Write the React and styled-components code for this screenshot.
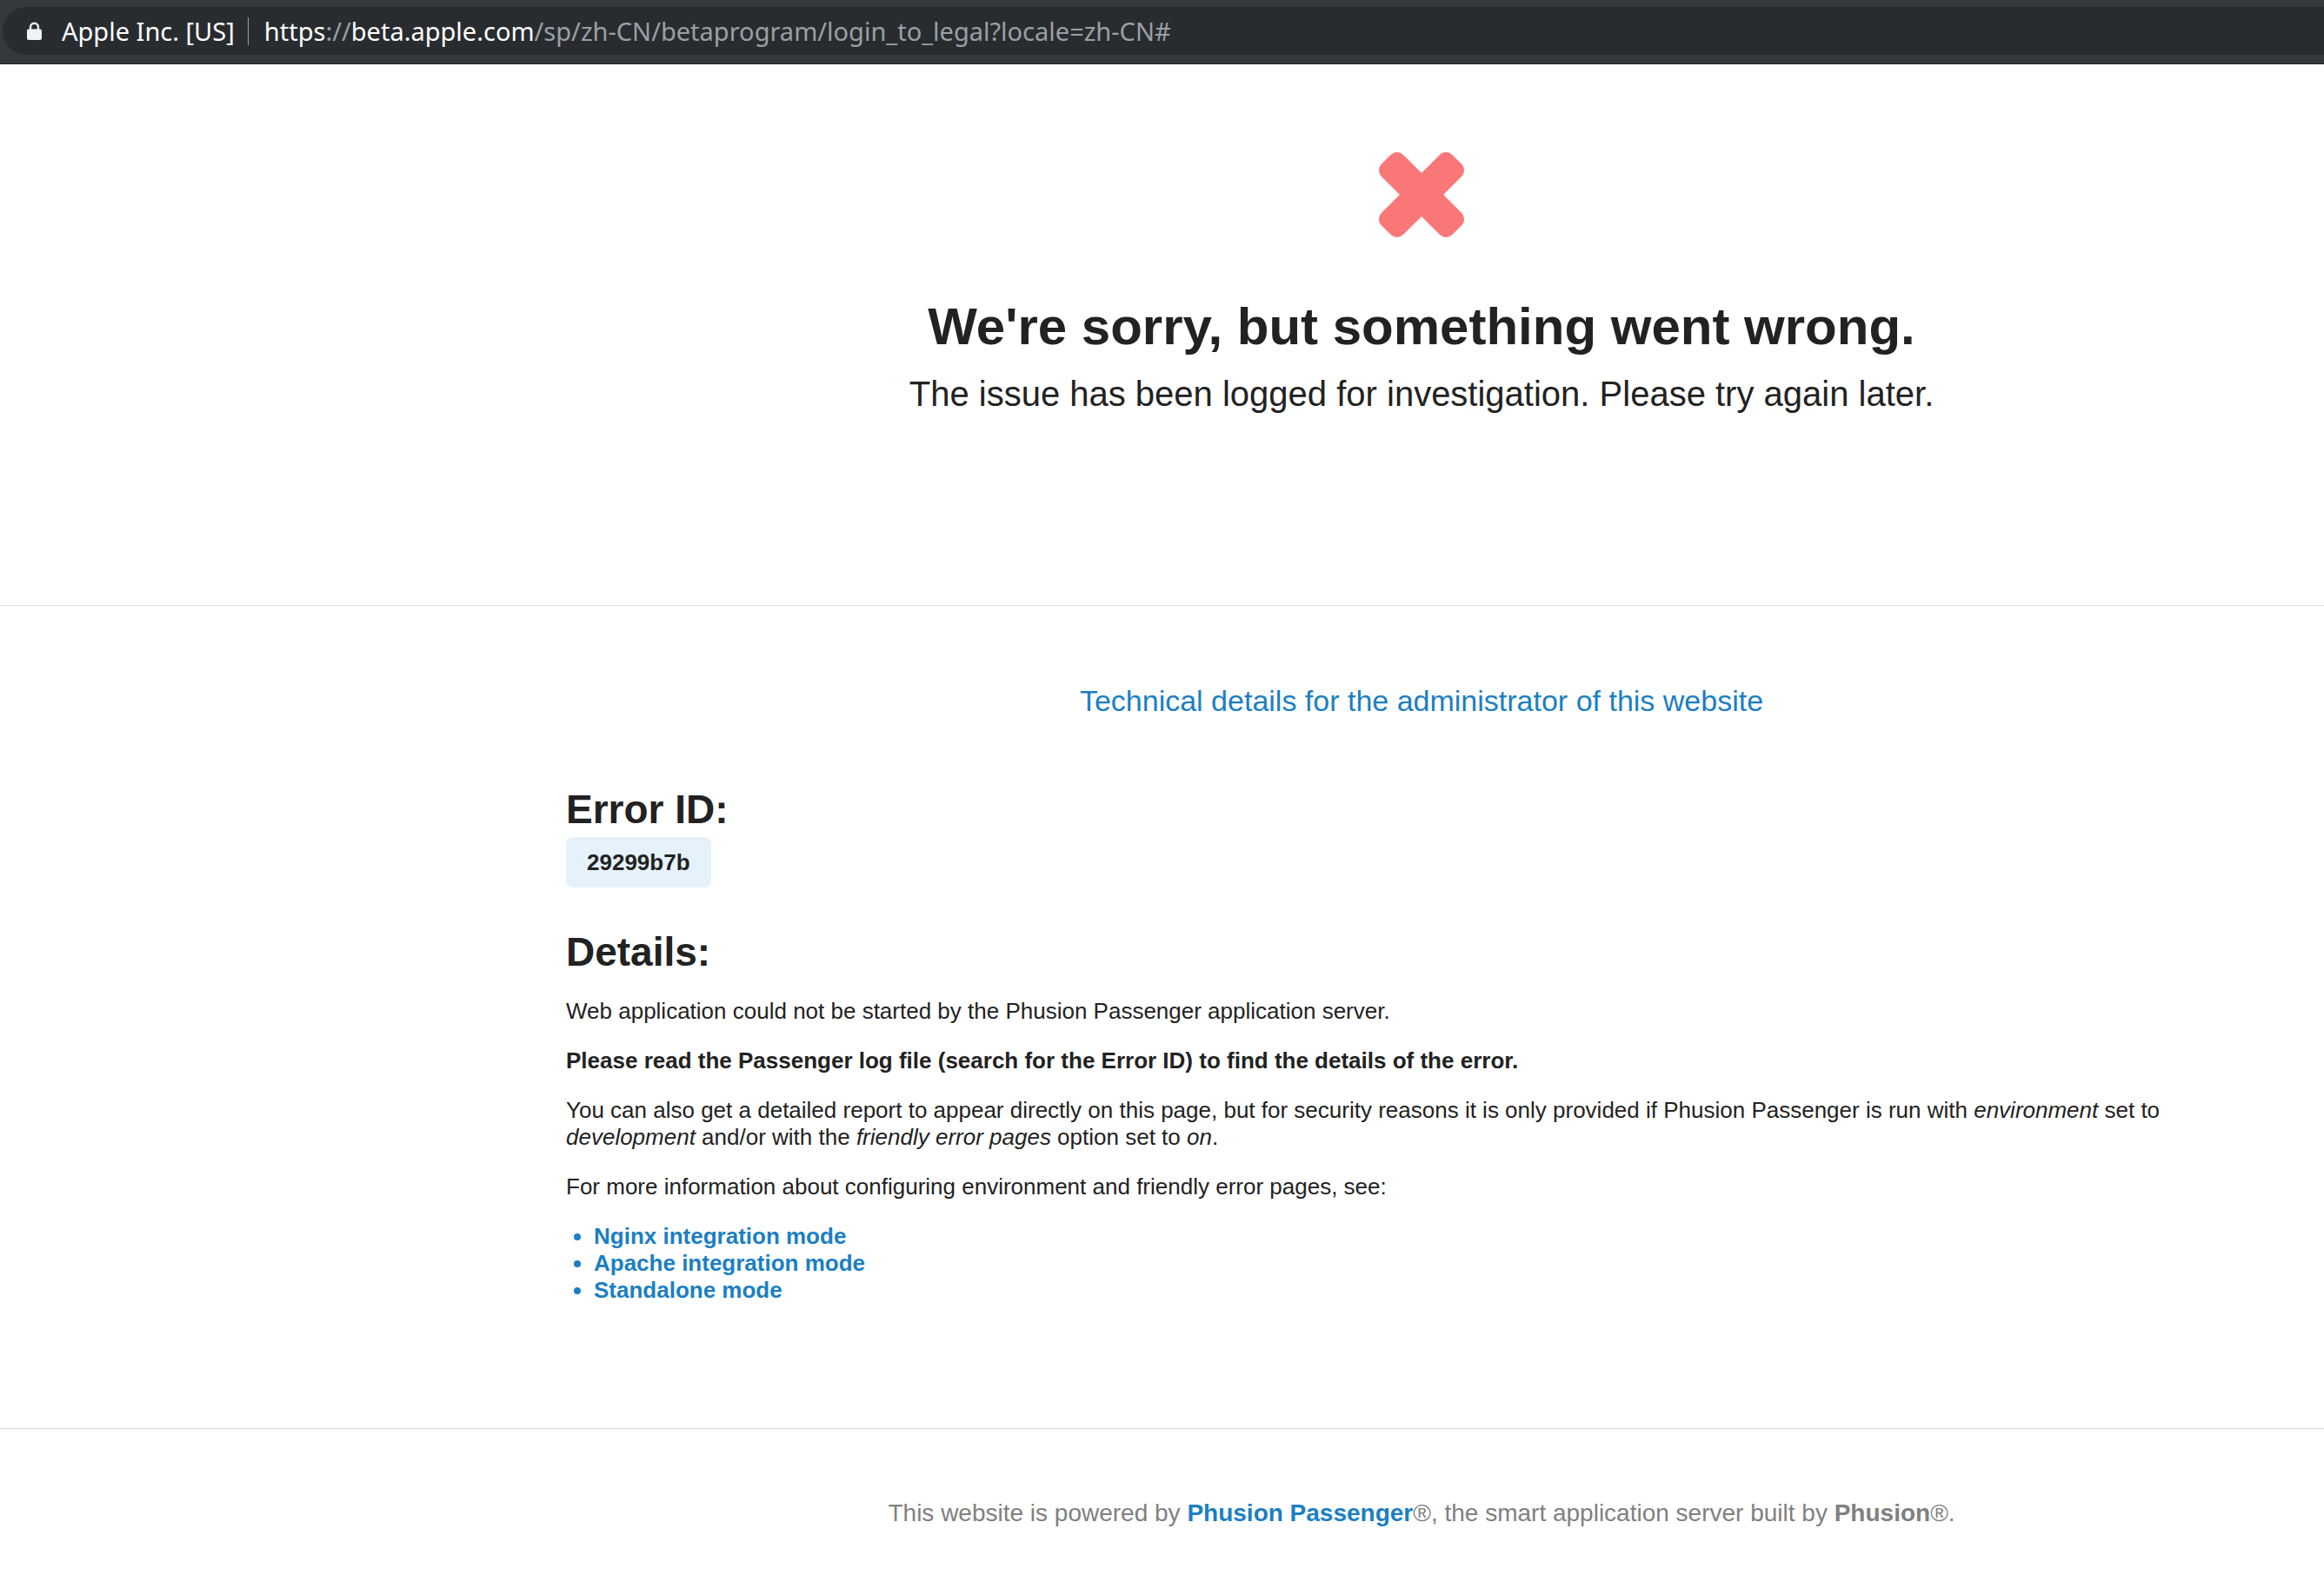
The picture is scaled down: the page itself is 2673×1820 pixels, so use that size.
import styled, { createGlobalStyle } from 'styled-components';

const GlobalStyle = createGlobalStyle`
  html, body {
    margin: 0;
    padding: 0;
    background: #fff;
  }
  body {
    font-family: "Liberation Sans", Arial, sans-serif;
    font-size: 26px;
    line-height: 31px;
    color: #222;
  }
`;

const AddressBar = styled.div`
  height: 74px;
  box-sizing: border-box;
  background: #35393c;
  border-bottom: 1px solid #202124;
  padding: 8px 0 10px 3px;
`;

const Omnibox = styled.div`
  height: 55px;
  background: #292c2f;
  border-radius: 28px 0 0 28px;
  display: flex;
  align-items: center;
  padding-left: 28px;
  font-family: "Noto Sans", "Liberation Sans", sans-serif;
  font-size: 29px;
  color: #fff;
`;

const Owner = styled.span`
  margin-left: 23px;
`;

const Divider = styled.span`
  width: 1px;
  height: 32px;
  background: #9aa0a6;
  margin: 0 18px 0 15px;
`;

const Muted = styled.span`
  color: #9aa0a6;
`;

const Hero = styled.section`
  height: 623px;
  border-bottom: 1px solid #dcdcdc;
  display: flex;
  flex-direction: column;
  align-items: center;
  padding: 100px 0 0 597px;
  box-sizing: border-box;
`;

const Title = styled.h1`
  margin: 67px 0 0;
  font-size: 60px;
  line-height: 70px;
  font-weight: 700;
`;

const Subtitle = styled.p`
  margin: 17px 0 0;
  font-size: 40px;
  line-height: 50px;
`;

const Content = styled.section`
  height: 947px;
  border-bottom: 1px solid #dcdcdc;
  box-sizing: border-box;
  padding: 88px 0 0 597px;
`;

const TechLink = styled.a`
  display: block;
  text-align: center;
  color: #1b7fc3;
  font-size: 34px;
  line-height: 42px;
`;

const Details = styled.div`
  padding: 0 176px 0 54px;
`;

const Heading = styled.h2`
  margin: ${(p) => p.$top}px 0 0;
  font-size: 46px;
  line-height: 56px;
  font-weight: 700;
`;

const ErrorCode = styled.div`
  display: inline-block;
  margin-top: 4px;
  padding: 14px 24px;
  background: #e5f2fc;
  border-radius: 8px;
  font-weight: 700;
  font-size: 26px;
  line-height: 30px;
`;

const Para = styled.p`
  margin: ${(p) => p.$top || 26}px 0 0;
`;

const Links = styled.ul`
  margin: 26px 0 0;
  padding: 0 0 0 32px;
  color: #1b7fc3;
  font-weight: 700;
`;

const Footer = styled.footer`
  padding: 81px 0 0 597px;
  text-align: center;
  color: #808080;
  font-size: 28px;
  line-height: 32px;
`;

const FooterLink = styled.a`
  color: #1b7fc3;
  font-weight: 700;
`;

const Cross = () => (
  <svg width="100" height="100" viewBox="0 0 100 100">
    <g fill="#fa7777">
      <rect x="-7.5" y="32.3" width="115" height="35.4" rx="10" transform="rotate(45 50 50)" />
      <rect x="-7.5" y="32.3" width="115" height="35.4" rx="10" transform="rotate(-45 50 50)" />
    </g>
  </svg>
);

const Lock = () => (
  <svg width="17" height="21" viewBox="0 0 18 22">
    <path
      d="M3 9V6.5a6 6 0 0 1 12 0V9h1a2 2 0 0 1 2 2v9a2 2 0 0 1-2 2H2a2 2 0 0 1-2-2v-9a2 2 0 0 1 2-2zM5.5 9h7V6.5a3.5 3.5 0 0 0-7 0z"
      fill="#f1f3f4"
    />
  </svg>
);

export default function App() {
  return (
    <>
      <GlobalStyle />
      <AddressBar>
        <Omnibox>
          <Lock />
          <Owner>Apple Inc. [US]</Owner>
          <Divider />
          <span>
            https<Muted>://</Muted>beta.apple.com<Muted>/sp/zh-CN/betaprogram/login_to_legal?locale=zh-CN#</Muted>
          </span>
        </Omnibox>
      </AddressBar>
      <Hero>
        <Cross />
        <Title>We're sorry, but something went wrong.</Title>
        <Subtitle>The issue has been logged for investigation. Please try again later.</Subtitle>
      </Hero>
      <Content>
        <TechLink>Technical details for the administrator of this website</TechLink>
        <Details>
          <Heading $top={76}>Error ID:</Heading>
          <ErrorCode>29299b7b</ErrorCode>
          <Heading $top={46}>Details:</Heading>
          <Para $top={25}>Web application could not be started by the Phusion Passenger application server.</Para>
          <Para><b>Please read the Passenger log file (search for the Error ID) to find the details of the error.</b></Para>
          <Para>
            You can also get a detailed report to appear directly on this page, but for security reasons it is only provided if Phusion Passenger is run with <i>environment</i> set to <i>development</i> and/or with the <i>friendly error pages</i> option set to <i>on</i>.
          </Para>
          <Para>For more information about configuring environment and friendly error pages, see:</Para>
          <Links>
            <li>Nginx integration mode</li>
            <li>Apache integration mode</li>
            <li>Standalone mode</li>
          </Links>
        </Details>
      </Content>
      <Footer>
        This website is powered by <FooterLink>Phusion Passenger</FooterLink>®, the smart application server built by <b>Phusion</b>®.
      </Footer>
    </>
  );
}
